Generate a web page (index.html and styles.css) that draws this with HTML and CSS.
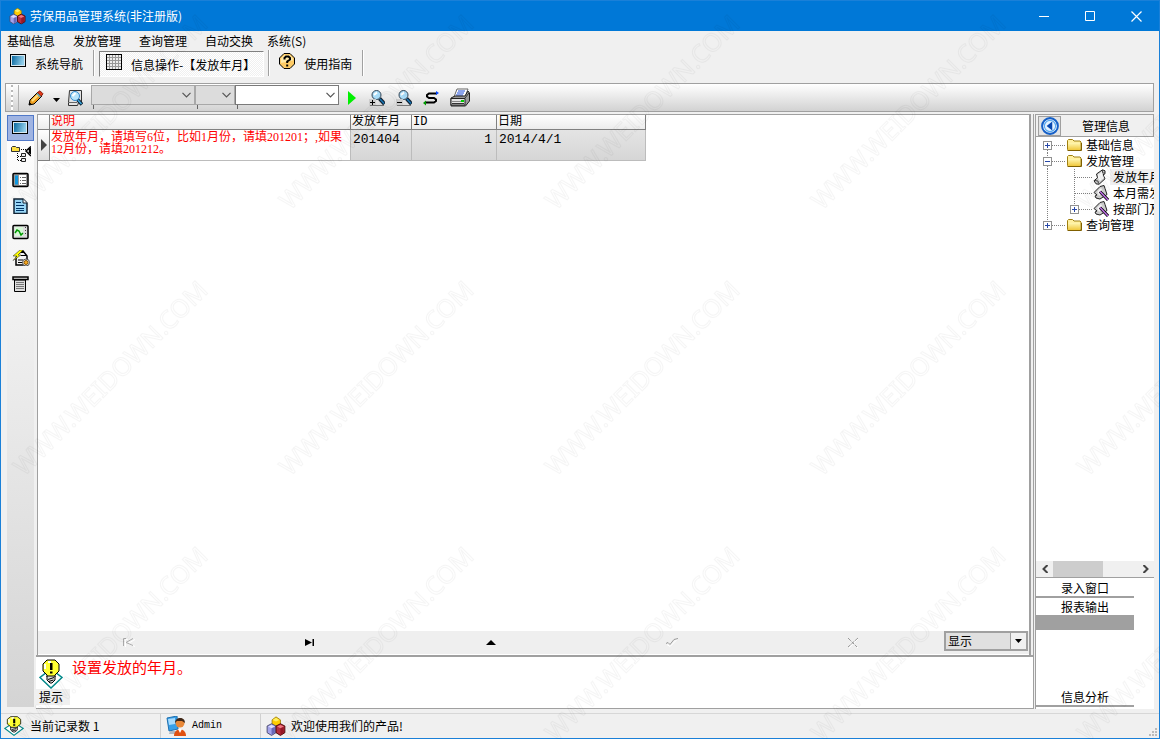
FILE: index.html
```html
<!DOCTYPE html>
<html lang="zh-CN">
<head>
<meta charset="utf-8">
<title>劳保用品管理系统</title>
<link rel="stylesheet" href="styles.css">
</head>
<body>
<svg class="defs" aria-hidden="true">
  <defs>
    <linearGradient id="screen" x1="0" y1="0" x2="1" y2=".2"><stop offset="0" stop-color="#0868a0"/><stop offset="1" stop-color="#90cce8"/></linearGradient>
    <linearGradient id="folderFill" x1="0" y1="0" x2="0" y2="1"><stop offset="0" stop-color="#fff6b0"/><stop offset="1" stop-color="#f0c83c"/></linearGradient>
    <symbol id="cubes" viewBox="0 0 18 18">
      <path d="M5.500 3.500 9 .8l4 2.700v4L9 10 5.500 7.500z" fill="#fc0" stroke="#a08000" stroke-width=".8"/>
      <path d="M6 3.500 9 1.500l3 2-3 1.500z" fill="#fff060"/>
      <path d="M1 9l4-2 4 2v6l-4 2.500-4-2.500z" fill="#a4a4ec" stroke="#446" stroke-width=".8"/>
      <path d="M2 9.500 5 8l3 1.500L5 11z" fill="#dcdcff"/><path d="M5 11v6l3-2v-5z" fill="#6868b8"/>
      <path d="M9 9l4-2 4 2v6l-4 2.500L9 15z" fill="#b83040" stroke="#400" stroke-width=".8"/>
      <path d="M10 9.500 13 8l3 1.500-3 1.500z" fill="#f07880"/><path d="M13 11v6l3-2v-5z" fill="#981828"/>
    </symbol>
    <symbol id="bulb" viewBox="0 0 24 30">
      <path d="M12 10 23 18.500 12 29 1 18.500z" fill="#fff" stroke="#088" stroke-width="1.500"/>
      <path d="M8 1h8l4 4v7l-4 4v2H8v-2l-4-4V5z" fill="#ff3" stroke="#000"/>
      <path d="M9 3h3M6 5v5" stroke="#fff" stroke-width="2"/>
      <path d="M11 4h2.500v7H11zM11 12.500h2.500v2H11z"/>
      <path d="M8 17h8v4l-3 3h-2l-3-3z" fill="#ddd" stroke="#000"/><path d="M9 20.500l6-2M9.500 22.500l5-1.500" stroke="#000"/>
    </symbol>
    <symbol id="monitor" viewBox="0 0 16 13"><rect x=".5" y=".5" width="15" height="12" fill="#d8e8f0" stroke="#000"/><rect x="2" y="2" width="12" height="9" fill="url(#screen)"/></symbol>
    <symbol id="chevron" viewBox="0 0 9 6"><path d="M.5.8l4 4 4-4" fill="none" stroke="#555" stroke-width="1.200"/></symbol>
    <symbol id="folder" viewBox="0 0 17 14"><path d="M1.500 11.500v-9l1-1h4l1.500 1.500h6l1 1v8z" fill="#fff0a0" stroke="#a08010"/><path d="M2 5h12v7H2z" fill="url(#folderFill)"/><path d="M1.500 12.500h14V5" fill="none" stroke="#806000"/></symbol>
    <symbol id="scroll" viewBox="0 0 16 16"><path d="M3.500 5 9.500 .8l2.500 1v3l-2 1 2 4-6 5.500-3-.5-2-3 3.500-3z" fill="#ccc" stroke="#222"/><path d="M9.500 1v3h2.500M2 11.500l3 .5.500 2.500" fill="none" stroke="#444"/><path d="M5 5.500l4-3 .5 3 1.500 3.500-4 3-2-3z" fill="#f6f6f6"/></symbol>
    <symbol id="scrollPen" viewBox="0 0 16 16"><path d="M1 7.500 7 1.500l4-1 1 3 2 6-7 4.500-4-1-1-2 2-1z" fill="#ccc" stroke="#222"/><path d="M4 7l4-4 2 4-4 4z" fill="#f6f6f6"/><path d="M7 6.500l8 8.500" stroke="#000" stroke-width="3"/><path d="M7 6.500l8 8.500" stroke="#c070e8" stroke-width="1.500"/></symbol>
    <symbol id="plusBox" viewBox="0 0 9 9"><rect x=".5" y=".5" width="8" height="8" fill="#fff" stroke="#919191"/><path d="M2 4.500h5M4.500 2v5" stroke="#2848a8"/></symbol>
    <symbol id="minusBox" viewBox="0 0 9 9"><rect x=".5" y=".5" width="8" height="8" fill="#fff" stroke="#919191"/><path d="M2 4.500h5" stroke="#2848a8"/></symbol>
    <symbol id="lens" viewBox="0 0 16 16"><path d="M9.500 8.500l5 5.500" stroke="#123" stroke-width="4"/><path d="M10 9l4 4.500" stroke="#1878b8" stroke-width="1.500"/><circle cx="6.500" cy="5" r="4.500" fill="#a8dcf8" stroke="#345"/><path d="M4 5l3-2.500" stroke="#fff" stroke-width="2"/></symbol>
  </defs>
</svg>

<div class="window">
  <header class="titlebar">
    <svg class="title-icon" viewBox="0 0 18 18"><use href="#cubes"/></svg>
    <h1 class="title">劳保用品管理系统(非注册版)</h1>
    <div class="window-controls">
      <button class="control" aria-label="最小化"><svg viewBox="0 0 11 11"><path d="M0 5.500h10" stroke="#fff"/></svg></button>
      <button class="control" aria-label="最大化"><svg viewBox="0 0 11 11"><path d="M.5.5h9v9h-9z" fill="none" stroke="#fff"/></svg></button>
      <button class="control" aria-label="关闭"><svg viewBox="0 0 11 11"><path d="M.5.5l10 10m0-10l-10 10" stroke="#fff" stroke-width="1.200"/></svg></button>
    </div>
  </header>

  <nav class="menu">
    <button>基础信息</button><button>发放管理</button><button>查询管理</button><button>自动交换</button><button class="menu-last">系统(S)</button>
  </nav>

  <div class="tabs">
    <button class="tab"><svg class="tab-monitor" viewBox="0 0 16 13"><use href="#monitor"/></svg><span>系统导航</span></button>
    <i class="divider"></i>
    <button class="tab tab-active"><svg class="icon16" viewBox="0 0 16 16"><rect x=".5" y=".5" width="15" height="15" fill="#eee" stroke="#000"/><path d="M3.500 1v14M6.500 1v14M9.500 1v14M12.500 1v14M1 3.500h14M1 6.500h14M1 9.500h14M1 12.500h14" stroke="#999"/></svg><span>信息操作-【发放年月】</span></button>
    <i class="divider"></i>
    <button class="tab tab-help"><svg class="icon16" viewBox="0 0 16 16"><path d="M5 .5h6L15.500 5v6L11 15.500H5L.5 11V5z" fill="#fc6" stroke="#000"/><path d="M5.500 2h5L14 5.500v2L2 10V5.500z" fill="#ffe9a8"/><path d="M5.500 6.500V5L7 3.500h2.500L11 5v1.500L8.200 8.500V10" fill="none" stroke="#000" stroke-width="2"/><path d="M7.200 11.500h2v2h-2z"/></svg><span>使用指南</span></button>
    <i class="divider"></i>
  </div>

  <div class="toolbar">
    <i class="grip"></i>
    <button class="tool tool-first" aria-label="编辑"><svg class="icon16" viewBox="0 0 16 16"><path d="M1 15l1-5 8-8 4 4-8 8z" fill="#f0a020" stroke="#000"/><path d="M4 11l7-7" stroke="#ffe080" stroke-width="2"/><path d="M9.500 2.500 12 .8l3 3-2 2.700z" fill="#e03818" stroke="#8a2010"/><path d="M9 3.500l3.500 3.500" stroke="#58a8c0" stroke-width="1.500"/><path d="M1 15l.5-3 2.300 2.300z"/></svg></button>
    <button class="tool tool-caret" aria-label="编辑选项"><svg viewBox="0 0 7 4"><path d="M0 0h7L3.500 4z"/></svg></button>
    <button class="tool" aria-label="预览"><svg class="icon16" viewBox="0 0 16 16"><path d="M2.500.5h12v12h-3l-1 3h-9v-3z" fill="#e4e4e4" stroke="#333"/><path d="M1 12.500h9" stroke="#666"/><path d="M10.500 9.500l4.500 5" stroke="#123" stroke-width="3.500"/><path d="M11 10l3.500 4" stroke="#38a8e0" stroke-width="1.500"/><circle cx="8" cy="6" r="4.500" fill="#b8e4fa" stroke="#38c"/><path d="M5.500 6l3-3" stroke="#fff" stroke-width="2"/></svg></button>
    <div class="combos">
      <label class="combo combo-field"><select disabled aria-label="字段"><option></option></select><svg viewBox="0 0 9 6"><use href="#chevron"/></svg></label>
      <label class="combo combo-operator"><select disabled aria-label="条件"><option></option></select><svg viewBox="0 0 9 6"><use href="#chevron"/></svg></label>
      <label class="combo combo-value"><select aria-label="内容"><option></option></select><svg viewBox="0 0 9 6"><use href="#chevron"/></svg></label>
    </div>
    <button class="tool tool-run" aria-label="执行"><svg viewBox="0 0 8 14"><path d="M0 0l8 7-8 7z" fill="#00f000"/></svg></button>
    <div class="tool-group">
      <button class="tool" aria-label="添加条件"><svg class="icon16" viewBox="0 0 16 16"><use href="#lens" x="1" width="16" height="16"/><path d="M0 9h7v7H0z" fill="#ccc"/><path d="M1 12.500h5M3.500 10v5" stroke="#000"/><path d="M1 15.500h14" stroke="#777"/></svg></button>
      <button class="tool" aria-label="移除条件"><svg class="icon16" viewBox="0 0 16 16"><use href="#lens" x="1" width="16" height="16"/><path d="M0 9h7v7H0z" fill="#ccc"/><path d="M1 12.500h5" stroke="#000"/><path d="M1 15.500h14" stroke="#777"/></svg></button>
      <button class="tool" aria-label="刷新"><svg class="icon16" viewBox="0 0 16 16"><path d="M14 3.500H6L4 5v1.500L6 8h5l2 1.500V11l-2 1.500H2" fill="none" stroke="#000" stroke-width="2"/><path d="M13 1l3 2-3 2z" fill="#04f"/><path d="M3 10.500 0 13l3 2.500z" fill="#090"/></svg></button>
      <button class="tool" aria-label="打印"><svg class="printer" viewBox="0 0 20 19"><path d="M7 1h11l-3 8H4z" fill="#fff" stroke="#666"/><path d="M8 3h7M7 5h7M6 7h7" stroke="#1848d8"/><path d="M1 10l4-2h10l3-5 1.500 2v8l-4 5H1z" fill="#999" stroke="#222"/><path d="M1 10.500h14V17H1z" fill="#e4e4e4" stroke="#222"/><path d="M2 13.500h12" stroke="#888"/><path d="M2 15.500h12" stroke="#333"/><path d="M11 12h3v2h-3z" fill="#0c0"/><path d="M15 10l4-5" stroke="#333"/></svg></button>
    </div>
  </div>

  <main class="workspace">
    <aside class="rail">
      <button class="rail-item rail-active" aria-label="窗口"><svg viewBox="0 0 18 16"><use href="#monitor" x="0" y="1" width="16" height="13"/></svg></button>
      <button class="rail-item" aria-label="结构"><svg class="rail-wide" viewBox="0 0 20 16"><path d="M.5 5.500v-4l1-1h3l1 1h3v4z" fill="#ffe040" stroke="#333"/><path d="M10 3.500h5M6.500 7v8M7 14.500h3M7 10.500h3" stroke="#000" stroke-dasharray="1 1"/><path d="M10.500 7.500h4v3h-4zM10.500 12.500h4v3h-4z" fill="#eee" stroke="#222"/><path d="M20 .5l-5 4.500 5 5M18.500 3v4M19.500 2v6" fill="none" stroke="#000" stroke-width="1.500"/></svg></button>
      <button class="rail-item" aria-label="列表"><svg viewBox="0 0 18 16"><rect x="1" y="1.500" width="15" height="13" rx="1" fill="#999" stroke="#000" stroke-width="1.500"/><path d="M3 3.500h3v9H3z" fill="#1098e0"/><path d="M7 3h7v10H7z" fill="#fff"/><path d="M8 5.500h1M10 5.500h4M8 8.500h1M10 8.500h4M8 11.500h1M10 11.500h4" stroke="#666"/></svg></button>
      <button class="rail-item" aria-label="文档"><svg viewBox="0 0 18 16"><path d="M2 1h9l4 4v10.500H2z" fill="#9ad8f8" stroke="#123" stroke-width="1.500"/><path d="M11 1v4h4" fill="#fff" stroke="#123"/><path d="M4 4.500h5M4 7.500h8M4 10.500h8M4 12.500h8" stroke="#036"/></svg></button>
      <button class="rail-item" aria-label="图表"><svg viewBox="0 0 18 16"><rect x="1" y="1.500" width="15" height="13" rx="1" fill="#ddd" stroke="#000" stroke-width="1.500"/><path d="M3 3h8v9H3z" fill="#d8f8d8"/><path d="M3 9l2-3 2 1 2 4 2-2" fill="none" stroke="#090" stroke-width="1.500"/><path d="M13.500 3v8" stroke="#444" stroke-dasharray="1 2"/></svg></button>
      <button class="rail-item" aria-label="操作"><svg viewBox="0 0 18 16"><path d="M5 4l6-3 4 5v6l-3 3H4V9z" fill="#f4f4f4" stroke="#000" stroke-width="1.500"/><path d="M6 10h5M6 12.500h5M9 5.500h5" stroke="#000"/><path d="M8 0 1 6h4L1 10.500l8-5.500H6l5-5z" fill="#ff0" stroke="#222" stroke-width=".5"/><circle cx="14" cy="12.500" r="3.500" fill="#eee" stroke="#555"/><circle cx="14" cy="12.500" r="2" fill="#f8a820" stroke="#850"/></svg></button>
      <button class="rail-item" aria-label="报表"><svg viewBox="0 0 18 16"><path d="M2.500 4h11v11.500h-11z" fill="#ddd" stroke="#000"/><path d="M1 1h15v2.500H1z" fill="#eee" stroke="#000" stroke-width="1.500"/><path d="M4 6.500h8M4 8.500h8M4 10.500h8M4 12.500h8" stroke="#777"/></svg></button>
    </aside>

    <section class="center">
      <div class="grid-panel">
        <div class="grid-scroll">
          <table class="grid">
            <colgroup><col class="col-mark"><col class="col-note"><col class="col-month"><col class="col-id"><col class="col-date"></colgroup>
            <thead><tr><th></th><th class="red">说明</th><th>发放年月</th><th>ID</th><th>日期</th></tr></thead>
            <tbody><tr>
              <td class="marker"><svg viewBox="0 0 6 12"><path d="M0 0l6 6-6 6z" fill="#444"/></svg></td>
              <td class="note">发放年月，请填写6位，比如1月份，请填201201；,如果12月份，请填201212。</td>
              <td>201404</td><td class="number">1</td><td>2014/4/1</td>
            </tr></tbody>
          </table>
        </div>
        <div class="navigator">
          <button class="nav-button" disabled aria-label="第一条"><svg viewBox="0 0 12 11"><path d="M2.500 10V2.500H5M12 2.500 5 6.500l7 3" fill="none" stroke="#fff"/><path d="M.5 9V1.500H3M10 1.500 3 5.500l7 3" fill="none" stroke="#aaa"/></svg></button>
          <button class="nav-button" aria-label="最后一条"><svg viewBox="0 0 12 11"><path d="M1 2l7 3.500L1 9zM8.500 2H10v7H8.500z"/></svg></button>
          <button class="nav-button" aria-label="上移"><svg viewBox="0 0 12 11"><path d="M1 8 6 3l5 5z"/></svg></button>
          <button class="nav-button" disabled aria-label="保存"><svg viewBox="0 0 12 11"><path d="M1 7.500l3 2 8-8" fill="none" stroke="#fff"/><path d="M0 6.500l2-1 2 2 4-5 4-1" fill="none" stroke="#999"/></svg></button>
          <button class="nav-button" disabled aria-label="取消"><svg viewBox="0 0 12 11"><path d="M2 2l9 9m0-9l-9 9" stroke="#fff"/><path d="M1 1l9 9m1-9L1 10" stroke="#999" stroke-dasharray="4 1"/></svg></button>
          <label class="show"><select aria-label="显示"><option>显示</option></select><span class="show-arrow"><svg viewBox="0 0 7 4"><path d="M0 0h7L3.500 4z"/></svg></span></label>
        </div>
      </div>
      <div class="tip">
        <div class="tip-label"><svg viewBox="0 0 24 30"><use href="#bulb"/></svg><span>提示</span></div>
        <p class="tip-text">设置发放的年月。</p>
      </div>
    </section>

    <aside class="side">
      <div class="side-head">
        <button class="back" aria-label="返回"><svg viewBox="0 0 16 16"><circle cx="8" cy="8" r="7" fill="#fff" stroke="#1560c8" stroke-width="1.800"/><circle cx="8" cy="8" r="5" fill="#e4f2ff" stroke="#5aaaf0"/><path d="M10 4v8L5 8z" fill="#0848b0"/></svg></button>
        <h2>管理信息</h2>
      </div>
      <ul class="tree">
        <li><svg class="branch" viewBox="0 0 30 16"><path d="M11.500 13v3M16 8.500h13" class="dots"/><use href="#plusBox" x="7" y="4" width="9" height="9"/></svg><svg class="folder" viewBox="0 0 17 14"><use href="#folder"/></svg><a href="#basic">基础信息</a></li>
        <li><svg class="branch" viewBox="0 0 30 16"><path d="M11.500 0v4M11.500 13v3M16 8.500h13" class="dots"/><use href="#minusBox" x="7" y="4" width="9" height="9"/></svg><svg class="folder" viewBox="0 0 17 14"><use href="#folder"/></svg><a href="#issue">发放管理</a></li>
        <li><svg class="branch-deep" viewBox="0 0 57 16"><path d="M11.500 0v16M38.500 0v16M39 8.500h17" class="dots"/></svg><svg class="icon16" viewBox="0 0 16 16"><use href="#scroll"/></svg><a href="#month" class="leaf selected">发放年月</a></li>
        <li><svg class="branch-deep" viewBox="0 0 57 16"><path d="M11.500 0v16M38.500 0v16M39 8.500h17" class="dots"/></svg><svg class="icon16" viewBox="0 0 16 16"><use href="#scrollPen"/></svg><a href="#need" class="leaf">本月需发</a></li>
        <li><svg class="branch-deep" viewBox="0 0 57 16"><path d="M11.500 0v16M38.500 0v4M43 8.500h13" class="dots"/><use href="#plusBox" x="34" y="4" width="9" height="9"/></svg><svg class="icon16" viewBox="0 0 16 16"><use href="#scrollPen"/></svg><a href="#dept" class="leaf">按部门及</a></li>
        <li><svg class="branch" viewBox="0 0 30 16"><path d="M11.500 0v4M16 8.500h13" class="dots"/><use href="#plusBox" x="7" y="4" width="9" height="9"/></svg><svg class="folder" viewBox="0 0 17 14"><use href="#folder"/></svg><a href="#query">查询管理</a></li>
      </ul>
      <div class="scrollbar">
        <button aria-label="向左"><svg viewBox="0 0 6 8"><path d="M5.500 0l-4 4 4 4" fill="none" stroke="#444" stroke-width="2"/></svg></button>
        <i class="thumb"></i>
        <button class="scroll-right" aria-label="向右"><svg viewBox="0 0 6 8"><path d="M.5 0l4 4-4 4" fill="none" stroke="#444" stroke-width="2"/></svg></button>
      </div>
      <div class="side-buttons">
        <button>录入窗口</button>
        <button>报表输出</button>
        <div class="bar"></div>
        <button class="analysis">信息分析</button>
      </div>
    </aside>
  </main>

  <footer class="status">
    <div class="status-cell"><svg viewBox="0 0 24 30" preserveAspectRatio="none"><use href="#bulb"/></svg><span>当前记录数 1</span></div>
    <div class="status-cell status-user"><svg viewBox="0 0 20 20"><path d="M1 2l10-2 1 13-9 2z" fill="#38a0e8" stroke="#2070b0"/><path d="M2 3l7-1v6L3 9z" fill="#a8dcff"/><path d="M4 15h7v3H3z" fill="#b0b8c0"/><circle cx="14" cy="7" r="4.500" fill="#e88838"/><path d="M9 7c0-6 10-7 10 0l-3-2h-5z" fill="#402818"/><path d="M8 20c0-9 12-9 12 0z" fill="#e05010"/><path d="M12 13l2 4 2-4z" fill="#fff"/></svg><span class="latin">Admin</span></div>
    <div class="status-cell status-message"><svg viewBox="0 0 18 18"><use href="#cubes"/></svg><span>欢迎使用我们的产品!</span></div>
    <svg class="resize" viewBox="0 0 8 8"><path d="M6 0h2v2H6zM3 3h2v2H3zM6 3h2v2H6zM0 6h2v2H0zM3 6h2v2H3zM6 6h2v2H6z" fill="#bbb"/></svg>
  </footer>
</div>

<svg class="watermark" aria-hidden="true">
  <defs><pattern id="mark" width="266" height="266" patternUnits="userSpaceOnUse" y="4"><text class="mark-text" transform="translate(24 207) rotate(-45)">WWW.WEIDOWN.COM</text></pattern></defs>
  <rect width="100%" height="100%" fill="url(#mark)"/>
</svg>
</body>
</html>
```
FILE: styles.css
```css
* { box-sizing: border-box; }

body {
  margin: 0;
  color: #000;
  background: #f0f0f0;
  font: 12px/16px "Noto Sans CJK SC", sans-serif;
}

button, select { font: inherit; color: inherit; }
button { padding: 0; border: 0; background: none; white-space: nowrap; }
svg { display: block; flex: none; }
h1, h2, p, ul { margin: 0; padding: 0; font-size: 12px; font-weight: 400; }

.defs { position: absolute; width: 0; height: 0; }
.icon16 { width: 16px; height: 16px; }

.window {
  display: flex;
  flex-direction: column;
  min-height: 100vh;
  border: 1px solid #1a80d8;
  background: #f0f0f0;
}

.titlebar { display: flex; align-items: center; height: 30px; padding-left: 8px; background: #0078d7; color: #fff; }
.title-icon { width: 17px; height: 18px; margin-right: 4px; }
.window-controls { display: flex; margin-left: auto; }
.control { display: grid; place-items: center; width: 46px; height: 30px; }
.control svg { width: 11px; height: 11px; }

.menu { display: flex; gap: 18px; height: 19px; padding-left: 6px; line-height: 19px; }
.menu-last { margin-left: -4px; }

.tabs { display: flex; height: 28px; padding-left: 9px; }
.tab { display: flex; align-items: flex-start; gap: 9px; height: 26px; padding: 4px 10px 0 0; }
.tab span { padding-top: 2px; }
.tab-monitor { width: 16px; height: 13px; }
.tab-active {
  margin: 1px 4px 0;
  padding: 2px 8px 0 6px;
  border: 1px solid;
  border-color: #808080 #fff #fff #808080;
  background: repeating-conic-gradient(#f0f0f0 0 25%, #fff 0 50%) 0 0 / 2px 2px;
}
.tab-active span { padding-top: 3px; }
.tab-help { margin-left: 9px; padding-top: 3px; }
.tab-help span { padding-top: 3px; }
.divider { width: 2px; height: 26px; border-left: 1px solid #a0a0a0; border-right: 1px solid #fff; }

.toolbar {
  display: flex;
  align-items: center;
  height: 29px;
  margin: 5px 5px 0 4px;
  padding-left: 5px;
  border: 1px solid #a0a0a0;
  background: linear-gradient(#fff, #d2d2d2);
}
.grip { width: 8px; height: 26px; border-right: 1px solid #b0b0b0; background: repeating-linear-gradient(#b8b8b8 0 2px, #fff 2px 5px) 0 0 / 2px 26px no-repeat; }
.tool-first { margin: 0 9px; }
.tool-caret { margin-right: 7px; padding-top: 4px; }
.tool-caret svg { width: 7px; height: 4px; }
.combos { display: flex; align-self: flex-start; margin: 1px 9px 0 8px; }
.combo { display: grid; position: relative; width: 104px; height: 20px; }
.combo::after { content: ""; position: absolute; left: 2px; top: 20px; height: 4px; border-left: 1px solid #666; }
.combo > * { grid-area: 1 / 1; }
.combo select { width: 100%; height: 20px; border: 1px solid #7a7a7a; border-radius: 0; background: #fff; appearance: none; }
.combo select:disabled { border-color: #a8a8a8; background: #dcdcdc; opacity: 1; }
.combo svg { width: 9px; height: 6px; align-self: center; justify-self: end; margin-right: 4px; pointer-events: none; }
.combo-operator { width: 40px; }
.tool-run { margin-right: 13px; }
.tool-run svg { width: 8px; height: 14px; }
.tool-group { display: flex; align-items: center; gap: 11px; }
.printer { width: 20px; height: 19px; }

.workspace { display: flex; flex: 1; min-height: 0; padding: 2px 5px 4px 6px; }

.rail { display: flex; flex: none; flex-direction: column; width: 27px; margin: 1px 2px 2px 0; background: linear-gradient(#fff, #d4d4d4); }
.rail-item { display: grid; place-items: center; height: 26px; }
.rail-item svg { width: 18px; height: 16px; }
.rail-item .rail-wide { width: 20px; }
.rail-active { border: 1px solid #5078c8; background: #a0b4e2; }

.center { display: flex; flex: 1; flex-direction: column; min-width: 0; border-right: 1px solid #a0a0a0; }
.grid-panel {
  display: flex;
  flex: 1;
  flex-direction: column;
  margin: 0 2px 0 1px;
  border: solid #a0a0a0;
  border-width: 1px 2px 0 1px;
  background: #fff;
}
.grid-scroll { flex: 1; overflow: hidden; }
.grid { border-collapse: separate; border-spacing: 0; table-layout: fixed; width: 608px; }
.grid th, .grid td { padding: 0 2px; border: solid #a0a0a0; border-width: 0 1px 1px 0; text-align: left; vertical-align: top; font-weight: 400; white-space: nowrap; overflow: hidden; }
.grid th { height: 15px; padding-left: 1px; line-height: 14px; font-family: "Liberation Mono", "Noto Sans CJK SC", monospace; background: linear-gradient(#fff, #ececec); border-color: #808080; }
.grid td { height: 31px; padding-top: 2px; border-color: #bcbcbc; background: linear-gradient(#e4e4e4, #d6d6d6); font: 13px/16px "Liberation Mono", monospace; }
.grid .red { color: #f00; }
.grid .note { padding: 1px 1px 0; color: #f00; background: #fff; font: 12px/12px "Liberation Serif", "Noto Sans CJK SC", serif; white-space: normal; }
.grid .number { padding-right: 4px; text-align: right; }
.grid .marker { padding: 0 2px 0 3px; vertical-align: middle; border-color: #808080; background: linear-gradient(#fff, #ddd); }
.marker svg { width: 6px; height: 12px; }
.col-mark { width: 12px; }
.col-note { width: 301px; }
.col-month { width: 61px; }
.col-id { width: 85px; }
.col-date { width: 149px; }

.navigator { display: flex; height: 24px; padding-right: 1px; border-bottom: 1px solid #fff; background: #efefef; }
.nav-button { display: grid; flex: 1; place-items: center; }
.nav-button svg { width: 12px; height: 11px; }
.show { display: grid; grid-template-columns: 1fr 16px; width: 84px; height: 20px; border: 2px solid #a0a0a0; background: #e0e0e0; }
.show select { grid-area: 1 / 1 / 2 / 3; width: 100%; padding: 0 2px; border: 0; border-radius: 0; background: none; appearance: none; }
.show-arrow { display: grid; grid-area: 1 / 2; place-items: center; border-left: 1px solid #a0a0a0; background: #f0f0f0; pointer-events: none; }
.show-arrow svg { width: 7px; height: 4px; }

.tip { display: flex; height: 54px; border-top: 2px solid #a0a0a0; border-bottom: 1px solid #a0a0a0; background: #fff; }
.tip-label { display: flex; flex-direction: column; width: 34px; padding: 2px 0 0 3px; }
.tip-label svg { width: 24px; height: 30px; }
.tip-label span { height: 16px; margin: 0 0 0 -3px; padding-left: 3px; background: #f0f0f0; }
.tip-text { padding: 0 2px; color: #f00; font-size: 15px; line-height: 20px; }

.side { display: flex; flex: none; flex-direction: column; width: 119px; margin-left: 1px; border: 1px solid #a0a0a0; border-width: 1px 0 0 1px; background: #fff; overflow: hidden; }
.side-head { display: flex; align-items: center; height: 22px; padding-left: 2px; border: 1px solid #a0a0a0; border-width: 0 1px 1px 0; background: #f0f0f0; }
.side-head h2 { flex: 1; padding-right: 2px; text-align: center; }
.back { display: grid; place-items: center; width: 23px; height: 20px; border: 1px solid #a0a0a0; background: #e4e4e4; }
.back svg { width: 18px; height: 18px; }
.tree { flex: 1; list-style: none; }
.tree li { display: flex; align-items: center; height: 16px; white-space: nowrap; }
.tree a { padding-left: 3px; color: inherit; text-decoration: none; }
.tree .leaf { margin-left: 1px; }
.tree .selected { background: #f0f0f0; }
.branch { width: 30px; height: 16px; }
.branch-deep { width: 57px; height: 16px; }
.folder { width: 17px; height: 14px; }
.dots { fill: none; stroke: #808080; stroke-dasharray: 1 1; }
.scrollbar { display: flex; height: 17px; border-bottom: 1px solid #a0a0a0; background: #f0f0f0; }
.scrollbar button { display: grid; place-items: center; width: 17px; }
.scrollbar svg { width: 6px; height: 8px; }
.thumb { width: 50px; background: #cdcdcd; }
.scrollbar .scroll-right { margin-left: auto; }
.side-buttons { display: flex; flex-direction: column; width: 98px; height: 131px; padding-top: 1px; }
.side-buttons button { height: 19px; border-bottom: 2px solid #a0a0a0; line-height: 17px; }
.side-buttons button + button { height: 17px; border-bottom: 0; }
.bar { height: 15px; background: #a0a0a0; }
.side-buttons .analysis { margin: auto 0 2px; border-bottom: 2px solid #a0a0a0; }

.status { display: flex; height: 25px; padding-left: 3px; border-top: 1px solid #d7d7d7; }
.status-cell { display: flex; align-items: center; gap: 6px; width: 156px; }
.status-cell svg { width: 20px; height: 20px; }
.status-user, .status-message { width: 100px; padding-left: 5px; border-left: 1px solid #d0d0d0; }
.status-message { width: auto; gap: 5px; }
.latin { font: 10px/16px "Liberation Mono", monospace; }
.resize { width: 8px; height: 8px; margin: auto 2px 2px auto; }

.watermark { position: fixed; inset: 0; width: 100%; height: 100%; pointer-events: none; }
.mark-text { fill: none; stroke: #000; stroke-opacity: .04; font: 25px "Noto Sans", sans-serif; }
```
